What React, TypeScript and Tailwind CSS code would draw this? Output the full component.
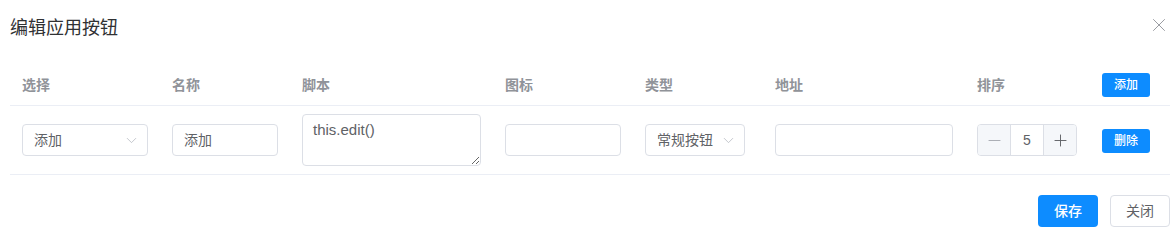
import { X, ChevronDown, Minus, Plus } from "lucide-react";

const FONT = { fontFamily: '"Liberation Sans", "Noto Sans CJK SC", sans-serif' };

const cols = "grid grid-cols-[150px_130px_203px_140px_130px_202px_125px_80px]";

function Select({ value, width }: { value: string; width: string }) {
  return (
    <div
      className={`flex h-8 items-center justify-between rounded border border-[#dcdfe6] bg-white pl-[11px] pr-[7px] text-sm text-[#606266] ${width}`}
    >
      <span>{value}</span>
      <ChevronDown className="size-[17px] text-[#b4b8c0]" strokeWidth={1.1} />
    </div>
  );
}

function Input({ value, width }: { value?: string; width: string }) {
  return (
    <div
      className={`flex h-8 items-center rounded border border-[#dcdfe6] bg-white px-[11px] text-sm text-[#606266] ${width}`}
    >
      {value}
    </div>
  );
}

function BlueButton({ label }: { label: string }) {
  return (
    <button className="h-6 w-12 rounded-[3px] bg-[#0d8cff] text-xs font-medium text-white">
      {label}
    </button>
  );
}

export default function App() {
  return (
    <div className="h-[235px] w-[1175px] bg-white pl-[10px] pr-[5px]" style={FONT}>
      {/* title */}
      <div className="relative flex h-[56px] items-center">
        <h2 className="text-lg leading-none text-[#303133]">编辑应用按钮</h2>
        <X className="absolute right-[0px] top-[14px] size-[22px] text-[#909399]" strokeWidth={1} />
      </div>

      {/* table */}
      <div className="mt-[9px]">
        <div className={`${cols} h-[41px] items-center border-b border-[#ebeef5] text-sm font-bold text-[#909399]`}>
          <div className="px-3">选择</div>
          <div className="px-3">名称</div>
          <div className="px-3">脚本</div>
          <div className="px-3">图标</div>
          <div className="px-3">类型</div>
          <div className="px-3">地址</div>
          <div className="px-3">排序</div>
          <div className="px-3">
            <BlueButton label="添加" />
          </div>
        </div>

        <div className={`${cols} h-[69px] items-center border-b border-[#ebeef5]`}>
          <div className="px-3">
            <Select value="添加" width="w-[126px]" />
          </div>
          <div className="px-3">
            <Input value="添加" width="w-[106px]" />
          </div>
          <div className="px-3">
            <textarea
              defaultValue="this.edit()"
              className="block h-[52px] w-[179px] resize rounded border border-[#dcdfe6] px-[10px] py-[4px] text-[15px] text-[#606266] outline-none"
              style={FONT}
            />
          </div>
          <div className="px-3">
            <Input width="w-[116px]" />
          </div>
          <div className="px-3">
            <Select value="常规按钮" width="w-[100px]" />
          </div>
          <div className="px-3">
            <Input width="w-[178px]" />
          </div>
          <div className="px-3">
            <div className="flex h-8 w-[100px] overflow-hidden rounded border border-[#dcdfe6] text-sm text-[#606266]">
              <div className="flex w-[33px] items-center justify-center border-r border-[#dcdfe6] bg-[#f5f7fa]">
                <Minus className="size-[19px] text-[#a8abb2]" strokeWidth={1.2} />
              </div>
              <div className="flex flex-1 items-center justify-center bg-white">5</div>
              <div className="flex w-[33px] items-center justify-center border-l border-[#dcdfe6] bg-[#f5f7fa]">
                <Plus className="size-[19px] text-[#606266]" strokeWidth={1.2} />
              </div>
            </div>
          </div>
          <div className="px-3">
            <BlueButton label="删除" />
          </div>
        </div>
      </div>

      {/* footer */}
      <div className="flex justify-end gap-3 pt-5">
        <button className="h-8 w-[60px] rounded bg-[#0d8cff] text-sm font-medium text-white">保存</button>
        <button className="h-8 w-[60px] rounded border border-[#dcdfe6] bg-white text-sm text-[#606266]">关闭</button>
      </div>
    </div>
  );
}
